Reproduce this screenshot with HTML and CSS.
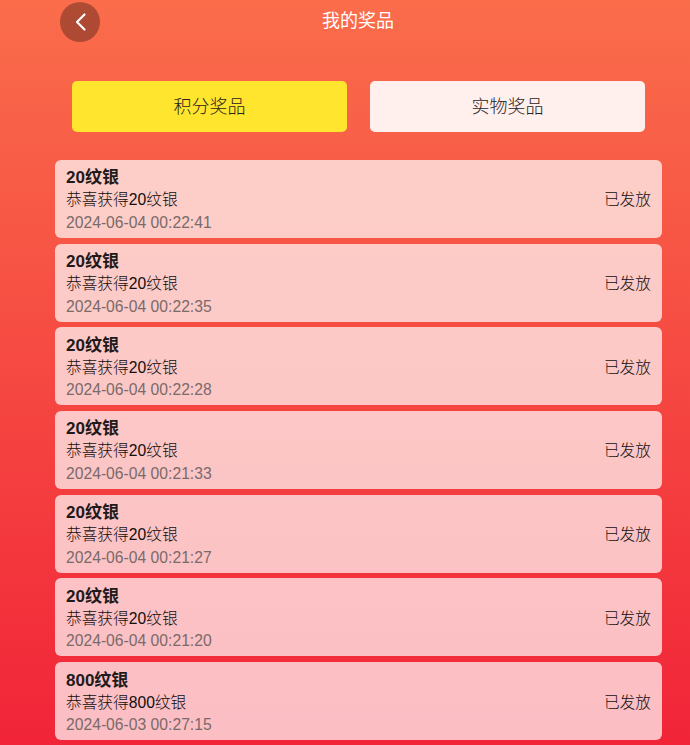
FILE: index.html
```html
<!DOCTYPE html>
<html lang="zh">
<head>
<meta charset="utf-8">
<title>我的奖品</title>
<link rel="stylesheet" href="styles.css">
</head>
<body>
<div class="page">
  <header class="header">
    <a class="back" href="#"><svg width="14" height="20" viewBox="0 0 14 20"><path d="M11.500 2.500 4 10l7.500 7.500" fill="none" stroke="#fff" stroke-width="2.200" stroke-linecap="round" stroke-linejoin="round"/></svg></a>
    <h1 class="title">我的奖品</h1>
  </header>
  <div class="tabs">
    <div class="tab active">积分奖品</div>
    <div class="tab">实物奖品</div>
  </div>
  <div class="list">
    <div class="card"><div class="info"><div class="name">20纹银</div><div class="desc">恭喜获得20纹银</div><div class="time">2024-06-04 00:22:41</div></div><div class="status">已发放</div></div>
    <div class="card"><div class="info"><div class="name">20纹银</div><div class="desc">恭喜获得20纹银</div><div class="time">2024-06-04 00:22:35</div></div><div class="status">已发放</div></div>
    <div class="card"><div class="info"><div class="name">20纹银</div><div class="desc">恭喜获得20纹银</div><div class="time">2024-06-04 00:22:28</div></div><div class="status">已发放</div></div>
    <div class="card"><div class="info"><div class="name">20纹银</div><div class="desc">恭喜获得20纹银</div><div class="time">2024-06-04 00:21:33</div></div><div class="status">已发放</div></div>
    <div class="card"><div class="info"><div class="name">20纹银</div><div class="desc">恭喜获得20纹银</div><div class="time">2024-06-04 00:21:27</div></div><div class="status">已发放</div></div>
    <div class="card"><div class="info"><div class="name">20纹银</div><div class="desc">恭喜获得20纹银</div><div class="time">2024-06-04 00:21:20</div></div><div class="status">已发放</div></div>
    <div class="card"><div class="info"><div class="name">800纹银</div><div class="desc">恭喜获得800纹银</div><div class="time">2024-06-03 00:27:15</div></div><div class="status">已发放</div></div>
  </div>
</div>
</body>
</html>
```
FILE: styles.css
```css
html, body {
  margin: 0;
  padding: 0;
  height: 745px;
  overflow: hidden;
}
body {
  font-family: "Liberation Sans", Arial, "Noto Sans CJK SC", sans-serif;
  background: linear-gradient(180deg, #fa6d4b 0%, #f12438 100%);
}
.page {
  display: flex;
  flex-direction: column;
  height: 745px;
  box-sizing: border-box;
}
.header {
  position: relative;
  height: 43px;
  display: flex;
  justify-content: center;
  align-items: center;
  margin-bottom: 38px;
}
.title {
  margin: 0 0 5px;
  font-size: 18px;
  font-weight: 400;
  color: #fff;
  transform: translateX(13px);
}
.back {
  position: absolute;
  left: 60px;
  top: 2px;
  width: 40px;
  height: 40px;
  border-radius: 50%;
  background: rgba(0, 0, 0, 0.3);
  display: flex;
  align-items: center;
  justify-content: center;
}
.tabs {
  display: flex;
  gap: 23px;
  padding-left: 72px;
  margin-bottom: 28px;
}
.tab {
  width: 275px;
  height: 51px;
  padding-bottom: 4px;
  box-sizing: border-box;
  border-radius: 5px;
  background: #fff0ee;
  color: #2a2222;
  font-size: 18px;
  font-weight: 300;
  display: flex;
  align-items: center;
  justify-content: center;
}
.tab.active {
  background: #ffe52d;
}
.list {
  display: flex;
  flex-direction: column;
  gap: 5.700px;
  margin-left: 55px;
  width: 607px;
}
.card {
  height: 78px;
  box-sizing: border-box;
  padding: 7.400px 11px 0;
  border-radius: 6px;
  background: rgba(255, 255, 255, 0.7);
  display: flex;
  justify-content: space-between;
  align-items: center;
}
.info {
  align-self: flex-start;
}
.name {
  font-size: 17px;
  line-height: 22px;
  font-weight: 700;
  color: #221a1a;
}
.desc {
  font-size: 15.700px;
  line-height: 22.600px;
  font-weight: 300;
  color: #140e0e;
}
.time {
  font-size: 15.700px;
  line-height: 22px;
  color: #7a6a6a;
}
.status {
  font-size: 15.700px;
  font-weight: 300;
  color: #140e0e;
  margin-top: -7.600px;
}
```
